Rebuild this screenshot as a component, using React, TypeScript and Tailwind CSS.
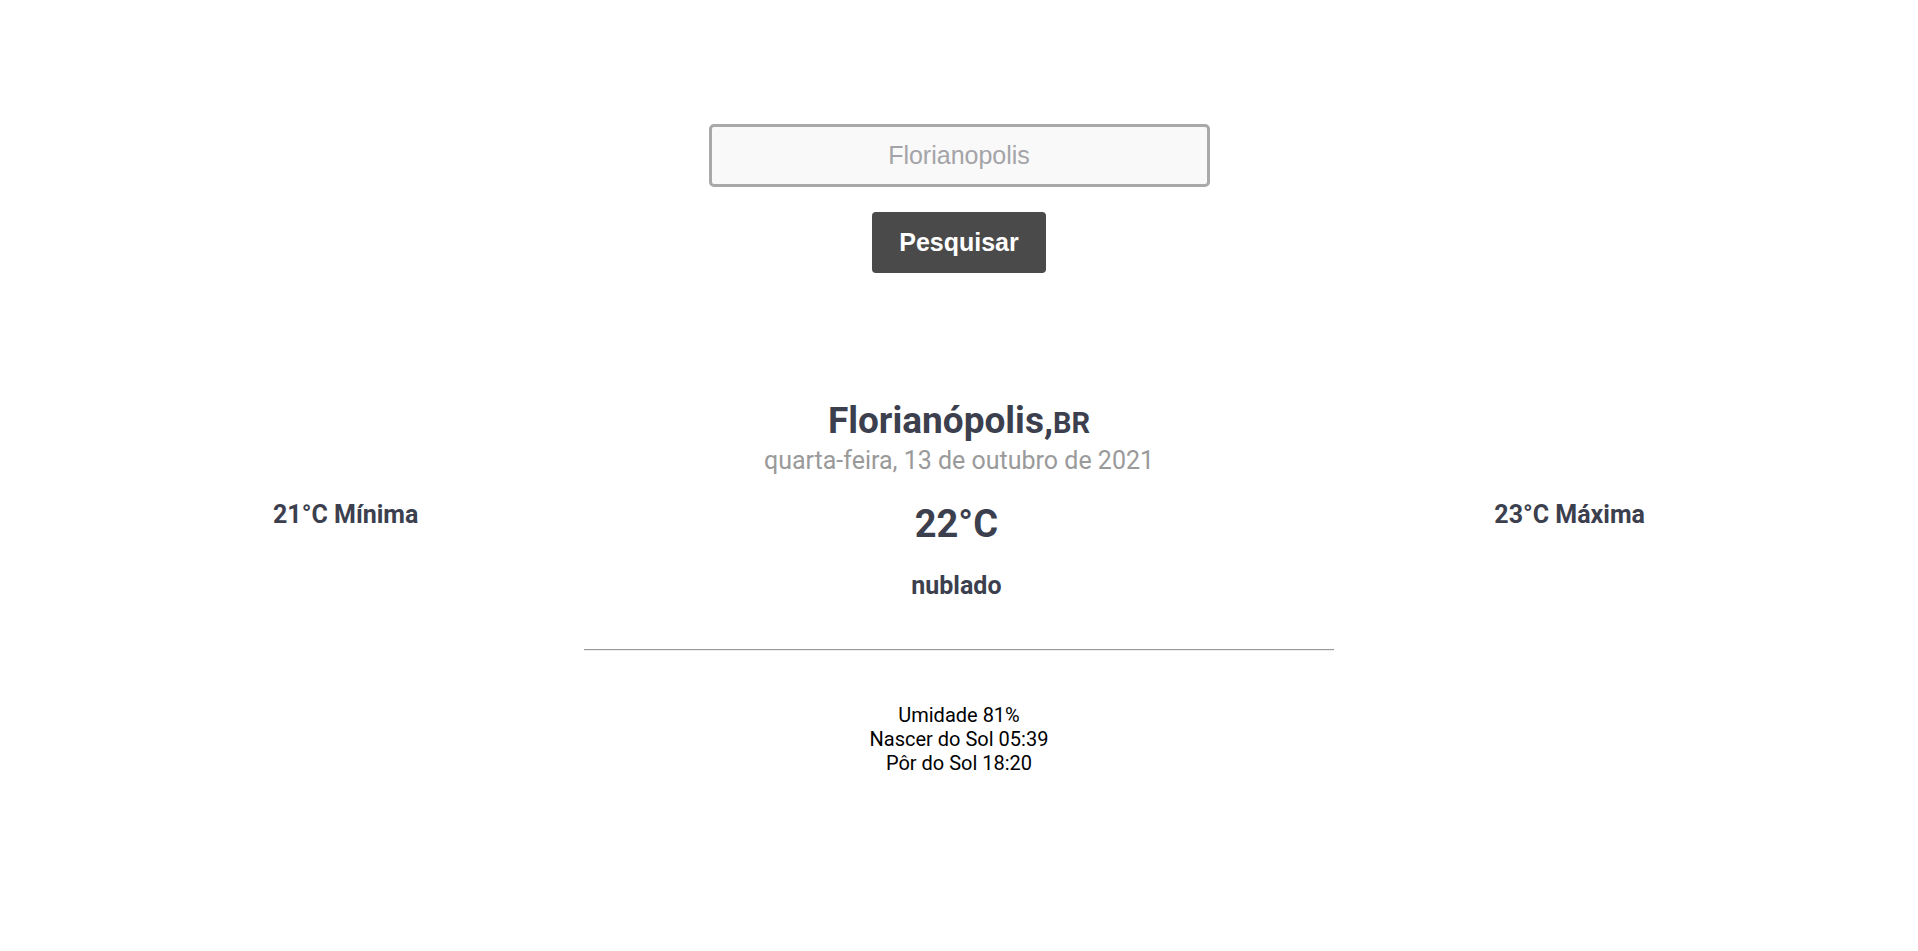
import { useState } from "react";

const details = [
  { label: "Umidade", value: "81%" },
  { label: "Nascer do Sol", value: "05:39" },
  { label: "Pôr do Sol", value: "18:20" },
];

export default function App() {
  const [city, setCity] = useState("");

  return (
    <div className="min-h-screen bg-white font-['Roboto',sans-serif] text-[#3c3f4e]">
      {/* Search */}
      <form
        onSubmit={(e) => e.preventDefault()}
        className="flex flex-col items-center pt-[124px]"
      >
        <input
          value={city}
          onChange={(e) => setCity(e.target.value)}
          placeholder="Florianopolis"
          className="h-[63px] w-[501px] rounded-[5px] border-[3px] border-[#a9a9a9] bg-[#f9f9f9] text-center font-['Liberation_Sans',Arial,sans-serif] text-[25px] text-[#333] outline-none placeholder:text-[#a4a4a8]"
        />
        <button
          type="submit"
          className="mt-[25px] h-[61px] w-[174px] rounded-[4px] bg-[#4a4a4a] font-['Liberation_Sans',Arial,sans-serif] text-[25px] font-bold text-white"
        >
          Pesquisar
        </button>
      </form>

      {/* Current weather */}
      <div className="mt-[126px] text-center">
        <h1 className="text-[37px] font-bold leading-[44px]">
          Florianópolis,<span className="text-[29px]">BR</span>
        </h1>
        <p className="mt-[2px] text-[25px] leading-[28px] text-[#9a9a9a]">
          quarta-feira, 13 de outubro de 2021
        </p>
      </div>

      <div className="mx-auto mt-[25px] flex w-[1372px] items-start justify-between">
        <p className="pt-[1px] text-[25px] font-bold leading-[28px]">21°C Mínima</p>
        <div className="flex flex-col items-center pt-[2px]">
          <p className="text-[38px] font-bold leading-[44px]">22°C</p>
          <p className="mt-[26px] text-[25px] font-bold leading-[28px]">nublado</p>
        </div>
        <p className="pt-[1px] text-[25px] font-bold leading-[28px]">23°C Máxima</p>
      </div>

      <hr className="mx-auto mt-[49px] w-[750px] border-t border-b border-t-[#9a9a9a] border-b-[#eeeeee]" />

      {/* Details */}
      <div className="mt-[52px] text-center text-[20px] leading-[24px] text-black">
        {details.map((d) => (
          <p key={d.label}>
            {d.label} {d.value}
          </p>
        ))}
      </div>
    </div>
  );
}
